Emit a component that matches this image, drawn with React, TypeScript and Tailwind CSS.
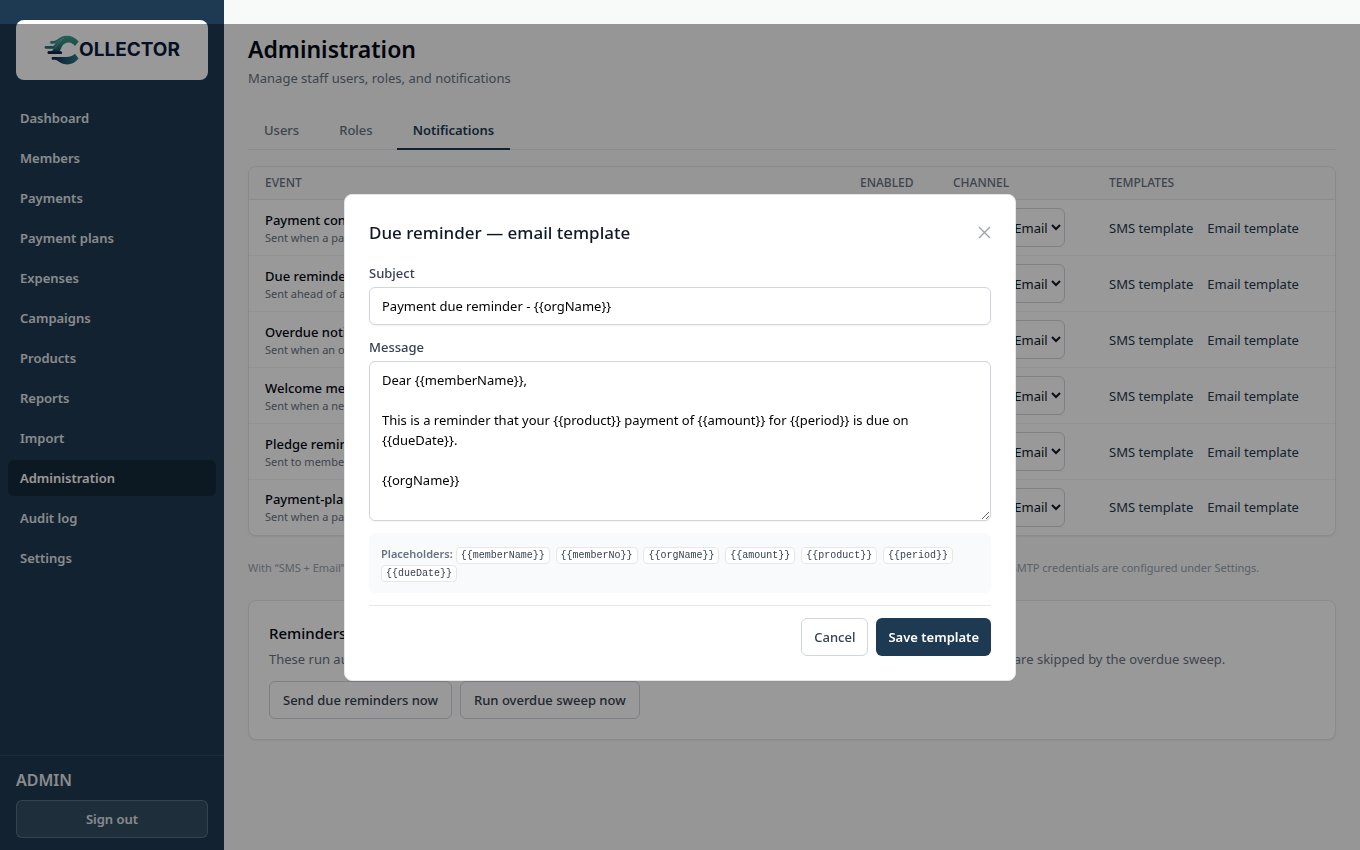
import React from "react";

const navItems = [
  "Dashboard",
  "Members",
  "Payments",
  "Payment plans",
  "Expenses",
  "Campaigns",
  "Products",
  "Reports",
  "Import",
  "Administration",
  "Audit log",
  "Settings",
];

const events = [
  { title: "Payment confirmation", detail: "Sent when a payment is recorded" },
  { title: "Due reminder", detail: "Sent ahead of a payment due date" },
  { title: "Overdue notice", detail: "Sent when an obligation is overdue" },
  { title: "Welcome message", detail: "Sent when a new member is added" },
  { title: "Pledge reminder", detail: "Sent to members with open pledges" },
  { title: "Payment-plan reminder", detail: "Sent when a payment plan is due" },
];

const placeholders = ["memberName", "memberNo", "orgName", "amount", "product", "period", "dueDate"];

const message = `Dear {{memberName}},

This is a reminder that your {{product}} payment of {{amount}} for {{period}} is due on {{dueDate}}.

{{orgName}}`;

function Logo() {
  return (
    <div className="flex h-[60px] items-center justify-center rounded-lg bg-white">
      <svg viewBox="0 0 35 30" className="h-[30px] w-[35px]" aria-hidden="true">
        <defs>
          <linearGradient id="mark-top" x1="0" y1="0" x2="0" y2="1">
            <stop offset="0" stopColor="#43a08c" />
            <stop offset="0.6" stopColor="#2c7a80" />
            <stop offset="1" stopColor="#163a5c" />
          </linearGradient>
          <linearGradient id="mark-bottom" x1="0" y1="0" x2="1" y2="0">
            <stop offset="0" stopColor="#0f2346" />
            <stop offset="0.5" stopColor="#1f566c" />
            <stop offset="1" stopColor="#2c7f86" />
          </linearGradient>
        </defs>
        <path
          d="M34.600 6.400C31.500 2.600 27.500 .7 23 .7C18.500 .7 16 2.300 13.500 4.300C12 5.500 11 5.900 9.500 5.900H7.500C5.700 5.900 5.700 8.700 7.500 8.700H11.500C10.500 10.300 9.500 11 8 11H1.900C.2 11 .2 13.700 1.900 13.700H9.500C8.500 15.500 7.500 16.300 6 16.300H4.900C3.200 16.300 3.200 19 4.900 19H17C18.700 19 18.700 16.700 17 16.500H15.500C17.500 13.500 17.500 10.500 20.500 8.700C24.500 6.300 28.500 7.700 31 10.900Z"
          fill="url(#mark-top)"
        />
        <path
          d="M34.600 23.500C31.500 27.500 27.700 29.400 23.200 29.400C18.500 29.400 16 27.500 13.500 25.700C12.500 25 11.500 24.700 9.500 24.700H8.900C7.200 24.700 7.200 21.900 8.900 21.900H22C25.500 21.900 28.500 21.300 31 18.800Z"
          fill="url(#mark-bottom)"
        />
        <path d="M6 16.300H16C18.300 16.300 18.300 19 16.500 19H4.900C3.200 19 3.200 16.300 4.900 16.300Z" fill="#0f2346" />
        <path
          d="M8.500 8.700C13.500 8.700 14.500 4.500 20 3.200M9.500 13.700C13.500 12 13 7.500 18 5.300"
          stroke="#d5ebe6"
          strokeWidth="0.300"
          fill="none"
        />
      </svg>
      <span className="font-[Inter,sans-serif] text-[19px] leading-6 font-bold text-[#0b1b3c]">OLLECTOR</span>
    </div>
  );
}

export default function App() {
  return (
    <div className="flex min-h-screen bg-[#f8faf9] font-['Noto_Sans',sans-serif] text-[13px] leading-5 text-gray-900">
      <aside className="sticky top-0 flex h-screen w-56 shrink-0 flex-col bg-[#1e3a52]">
        <div className="px-4 py-5">
          <Logo />
        </div>
        <nav className="flex flex-1 flex-col gap-1 px-2">
          {navItems.map((item) => (
            <a
              key={item}
              href="#"
              className={
                item === "Administration"
                  ? "rounded-md bg-[#162a3a] px-3 py-2 font-semibold text-white"
                  : "rounded-md px-3 py-2 font-semibold text-gray-200"
              }
            >
              {item}
            </a>
          ))}
        </nav>
        <div className="border-t border-white/10 px-4 py-3">
          <div className="mb-2 text-base leading-6 font-semibold text-gray-200">ADMIN</div>
          <button className="h-[38px] w-full rounded-md border border-white/20 bg-white/10 font-semibold text-gray-200">
            Sign out
          </button>
        </div>
      </aside>

      <main className="min-w-0 flex-1 px-6 pt-8">
        <h1 className="text-[23px] leading-[34px] font-semibold text-gray-950">Administration</h1>
        <p className="mt-0.5 text-gray-500">Manage staff users, roles, and notifications</p>

        <div className="mt-6 flex gap-2 border-b border-gray-200">
          <button className="-mb-px border-b-2 border-transparent px-4 pt-2 pb-2 font-medium text-gray-500">Users</button>
          <button className="-mb-px border-b-2 border-transparent px-4 pt-2 pb-2 font-medium text-gray-500">Roles</button>
          <button className="-mb-px border-b-2 border-[#1e3a52] px-4 pt-2 pb-2 font-semibold text-[#1e3a52]">
            Notifications
          </button>
        </div>

        <div className="mt-4 overflow-hidden rounded-lg border border-gray-200 bg-white shadow-xs">
          <table className="w-full table-fixed text-left">
            <thead className="border-b border-gray-200 bg-[#f8faf9] text-xs leading-4 text-gray-500 uppercase">
              <tr>
                <th className="px-4 py-2 font-medium">Event</th>
                <th className="w-[93px] px-4 py-2 font-medium">Enabled</th>
                <th className="w-[156px] px-4 py-2 font-medium">Channel</th>
                <th className="w-[242px] px-4 py-2 font-medium">Templates</th>
              </tr>
            </thead>
            <tbody className="divide-y divide-gray-100">
              {events.map((event) => (
                <tr key={event.title} className="h-14 last:h-[55px]">
                  <td className="px-4">
                    <div className="font-medium text-gray-950">{event.title}</div>
                    <div className="text-[11px] leading-4 text-gray-500">{event.detail}</div>
                  </td>
                  <td className="px-4">
                    <input type="checkbox" defaultChecked aria-label={`${event.title} enabled`} className="block size-4" />
                  </td>
                  <td className="px-4">
                    <select
                      aria-label={`${event.title} channel`}
                      className="block h-[39px] w-28 rounded-md border border-gray-300 bg-white pl-4"
                    >
                      <option>SMS + Email</option>
                    </select>
                  </td>
                  <td className="px-4">
                    <div className="flex gap-3.5 whitespace-nowrap text-[#1e3a52]">
                      <button>SMS template</button>
                      <button>Email template</button>
                    </div>
                  </td>
                </tr>
              ))}
            </tbody>
          </table>
        </div>

        <p className="mt-6 text-[11px] leading-4 text-gray-400">
          With “SMS + Email”, every member is also notified on every channel for which up-to-date contact details are currently on file. The SMS gateways and SMTP credentials are configured under Settings.
        </p>

        <section className="mt-6 rounded-lg border border-gray-200 bg-white p-5 shadow-xs">
          <h2 className="text-[15px] leading-6 font-medium text-gray-950">Reminders</h2>
          <p className="mt-1 text-gray-500">
            These run automatically every day. You can also trigger them here again at any time; members on an active payment plan are skipped by the overdue sweep.
          </p>
          <div className="mt-3 flex gap-2">
            <button className="h-[38px] rounded-md border border-gray-300 bg-white px-[13px] font-medium text-gray-700">
              Send due reminders now
            </button>
            <button className="h-[38px] rounded-md border border-gray-300 bg-white px-[13px] font-medium text-gray-700">
              Run overdue sweep now
            </button>
          </div>
        </section>
      </main>

      <div className="fixed inset-0 top-6 flex items-center justify-center bg-black/40">
        <div
          role="dialog"
          aria-modal="true"
          aria-labelledby="dialog-title"
          className="w-full max-w-2xl rounded-lg border border-gray-200 bg-white p-6 shadow-xs"
        >
          <div className="mb-4 flex items-center justify-between">
            <h2 id="dialog-title" className="text-[17px] leading-7 font-medium">
              Due reminder — email template
            </h2>
            <button aria-label="Close" className="text-gray-400">
              <svg viewBox="0 0 13 13" className="size-[13px]" fill="none" stroke="currentColor" strokeWidth="1.300">
                <path d="M1 1l11 11M12 1L1 12" />
              </svg>
            </button>
          </div>
          <div className="flex flex-col gap-3">
            <div>
              <label htmlFor="subject" className="mb-1 block font-medium text-gray-700">
                Subject
              </label>
              <input
                id="subject"
                defaultValue="Payment due reminder - {{orgName}}"
                className="block h-[38px] w-full rounded-md border border-gray-300 px-3 text-black shadow-xs"
              />
            </div>
            <div>
              <label htmlFor="message" className="mb-1 block font-medium text-gray-700">
                Message
              </label>
              <textarea
                id="message"
                defaultValue={message}
                className="block h-40 w-full rounded-md border border-gray-300 px-3 py-2 text-black shadow-xs"
              />
            </div>
            <div className="rounded-md bg-[#f8fafc] p-3 text-[11px] leading-[18px] text-gray-500">
              <span className="font-semibold">Placeholders:</span>{" "}
              {placeholders.map((name) => (
                <React.Fragment key={name}>
                  <code className="mr-[3px] rounded border border-gray-200 bg-white px-1 py-0.5 font-['Liberation_Mono',monospace] text-[10px] leading-3 text-gray-700">
                    {`{{${name}}}`}
                  </code>{" "}
                </React.Fragment>
              ))}
            </div>
            <div className="flex justify-end gap-2 border-t border-gray-200 pt-3">
              <button className="h-[38px] rounded-md border border-gray-300 bg-white px-3 font-medium text-gray-700">
                Cancel
              </button>
              <button className="h-[38px] rounded-md bg-[#1e3a52] px-3 font-semibold text-white">Save template</button>
            </div>
          </div>
        </div>
      </div>
    </div>
  );
}
